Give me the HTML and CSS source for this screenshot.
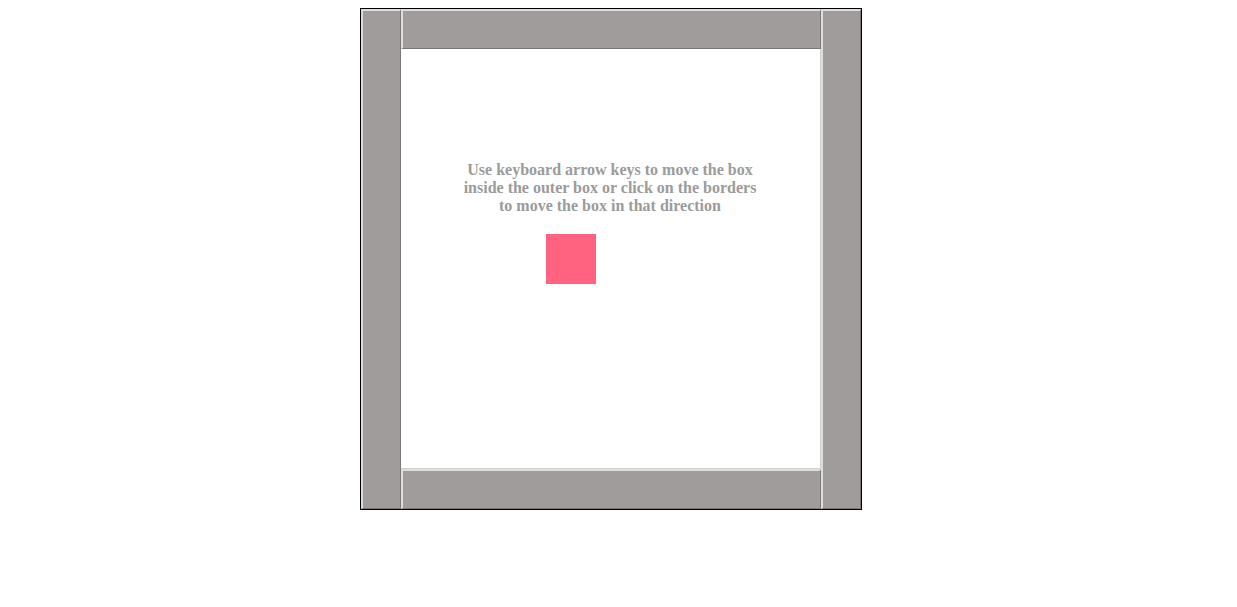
FILE: index.html
```html
<!DOCTYPE html>
<html>
<head>
<meta charset="utf-8">
<link rel="stylesheet" href="styles.css">
</head>
<body>
<div class="page">
  <div class="frame">
    <button class="bar bar-left" aria-label="left"></button>
    <button class="bar bar-top" aria-label="up"></button>
    <div class="field">
      <p class="hint">Use keyboard arrow keys to move the box<br>inside the outer box or click on the borders<br>to move the box in that direction</p>
      <div class="mover" style="left:145px;top:185px"></div>
    </div>
    <button class="bar bar-bottom" aria-label="down"></button>
    <button class="bar bar-right" aria-label="right"></button>
  </div>
</div>
</body>
</html>
```

FILE: styles.css
```css
html, body {
  margin: 0;
  padding: 0;
  background: #ffffff;
}

.page {
  display: flex;
  justify-content: center;
  padding: 8px 16px 0 0;
}

.frame {
  width: 500px;
  height: 500px;
  border: 1px solid #000000;
  display: grid;
  grid-template-columns: 40px 420px 40px;
  grid-template-rows: 40px 420px 40px;
}

.bar {
  margin: 0;
  padding: 0;
  background: #a09c9b;
  border-style: solid;
  border-width: 2px 1px 1px 2px;
  border-color: #dedddd #7c7878 #7c7878 #dedddd;
  cursor: pointer;
  display: block;
}

.bar-left {
  grid-column: 1;
  grid-row: 1 / 4;
}

.bar-right {
  grid-column: 3;
  grid-row: 1 / 4;
}

.bar-top {
  grid-column: 2;
  grid-row: 1;
}

.bar-bottom {
  grid-column: 2;
  grid-row: 3;
}

.field {
  grid-column: 2;
  grid-row: 2;
  position: relative;
  background: #ffffff;
  border-right: 1px solid #d2d2d2;
  border-bottom: 1px solid #d2d2d2;
  box-sizing: border-box;
  padding-top: 112px;
  display: flex;
  flex-direction: column;
  align-items: center;
}

.hint {
  margin: 0;
  font-family: "Liberation Serif", "Times New Roman", serif;
  font-weight: bold;
  font-size: 16px;
  line-height: 18px;
  color: #9b9b9b;
  text-align: center;
}

.mover {
  position: absolute;
  width: 50px;
  height: 50px;
  background: #ff6380;
}
```
